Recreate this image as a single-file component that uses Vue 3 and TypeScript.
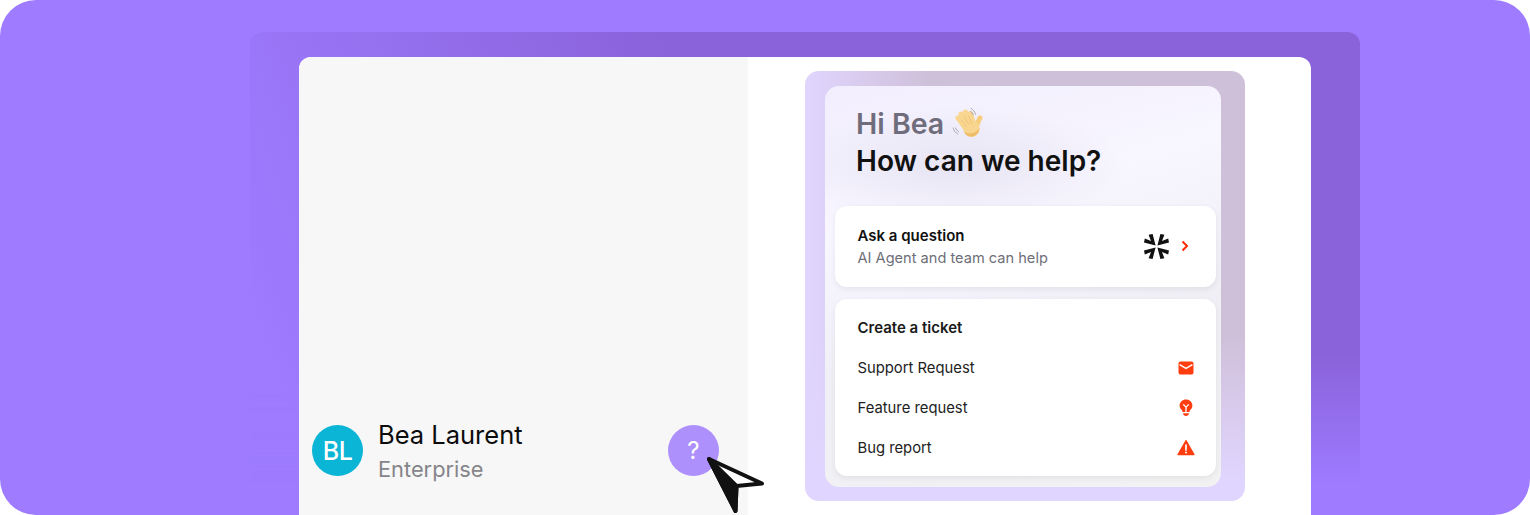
<script setup lang="ts">
const tickets = [
  { label: 'Support Request', icon: 'mail' },
  { label: 'Feature request', icon: 'bulb' },
  { label: 'Bug report', icon: 'alert' },
]
</script>

<template>
  <main class="stage">
    <div class="panel">
      <div class="window">
        <section class="app-side">
          <div class="user-row">
            <div class="avatar">BL</div>
            <div class="user-text">
              <div class="user-name">Bea Laurent</div>
              <div class="user-plan">Enterprise</div>
            </div>
            <button class="help-btn">?</button>
          </div>
          <svg class="cursor" width="60" height="62" viewBox="0 0 60 62">
            <path d="M4 4 L30.5 56 L31.5 31 L57 28.5 Z" fill="#fff" stroke="#111" stroke-width="4" stroke-linejoin="round" />
            <path d="M4 4 L30.5 56 L31.5 31 Z" fill="#111" stroke="#111" stroke-width="4" stroke-linejoin="round" />
          </svg>
        </section>
        <section class="widget-side">
          <div class="shell">
            <div class="widget">
              <header class="greeting">
                <div class="hi">
                  <span>Hi Bea</span>
                  <svg class="wave" width="33" height="32" viewBox="0 0 33 32">
                    <g fill="none" stroke="#f8d68f" stroke-width="5" stroke-linecap="round">
                      <path d="M6 11 L14 22" />
                      <path d="M9 7 L16 19" />
                      <path d="M13.5 5 L19 18" />
                      <path d="M18.5 6.5 L22 18" />
                      <path d="M28 11 C26 14 25 17 24 21" stroke="#f6cd7f" />
                    </g>
                    <ellipse cx="19.5" cy="21.5" rx="8.2" ry="8.3" fill="#f8d68f" />
                    <path d="M12 25 C14 29.5 19.5 31 23.5 28.5 C26 27 27.2 24 27.6 20.5 C25.5 25.5 18 28 12 25 Z" fill="#efbd68" />
                    <path d="M9 12.5 L14.5 20 M12.4 9.5 L17 18 M16.6 8.5 L20 17.5" fill="none" stroke="#eebf72" stroke-width=".7" />
                    <path d="M19 1.5 C21.5 2.8 23 4.8 23.6 7.4 M18.6 4.4 C20 5.2 20.8 6.4 21.2 7.8 M1.2 21 C1.8 23.6 3.4 25.8 5.8 27.2 M3.6 21 C4.2 22.6 5.2 23.8 6.6 24.8" fill="none" stroke="#a5a1aa" stroke-width=".9" stroke-linecap="round" />
                  </svg>
                </div>
                <h1>How can we help?</h1>
              </header>
              <a class="card ask">
                <div>
                  <div class="ask-title">Ask a question</div>
                  <div class="ask-sub">AI Agent and team can help</div>
                </div>
                <svg class="logo" width="25" height="25" viewBox="0 0 25 25" fill="#111">
                  <path d="M11.6 11.6 L0 8.6 L0.8 4.6 L7 7 L4.6 0.8 L8.6 0 Z" />
                  <path d="M11.6 11.6 L0 8.6 L0.8 4.6 L7 7 L4.6 0.8 L8.6 0 Z" transform="matrix(-1 0 0 1 25 0)" />
                  <path d="M11.6 11.6 L0 8.6 L0.8 4.6 L7 7 L4.6 0.8 L8.6 0 Z" transform="matrix(1 0 0 -1 0 25)" />
                  <path d="M11.6 11.6 L0 8.6 L0.8 4.6 L7 7 L4.6 0.8 L8.6 0 Z" transform="matrix(-1 0 0 -1 25 25)" />
                </svg>
                <svg class="chevron" width="8" height="12" viewBox="0 0 8 12" fill="none" stroke="#ff2a00" stroke-width="2">
                  <path d="M1.5 1.5 L6 6 L1.5 10.5" />
                </svg>
              </a>
              <div class="card tickets">
                <div class="tickets-title">Create a ticket</div>
                <div v-for="t in tickets" :key="t.label" class="ticket-row">
                  <span>{{ t.label }}</span>
                  <svg v-if="t.icon === 'mail'" width="18" height="18" viewBox="0 0 18 18">
                    <path d="M1.5 4.6 C1.5 3.4 2.4 2.5 3.6 2.5 L14.4 2.5 C15.6 2.5 16.5 3.4 16.5 4.6 L16.5 13.4 C16.5 14.6 15.6 15.5 14.4 15.5 L3.6 15.5 C2.4 15.5 1.5 14.6 1.5 13.4 Z" fill="#ff3d0f" />
                    <path d="M2.6 5.6 L9 9.4 L15.4 5.6" fill="none" stroke="#fff" stroke-width="1.4" />
                  </svg>
                  <svg v-else-if="t.icon === 'bulb'" width="18" height="18" viewBox="0 0 18 18">
                    <path d="M9 0.6 C5.4 0.6 2.6 3.3 2.6 6.6 C2.6 8.8 3.9 10.4 5.2 11.6 L5.5 13 L12.5 13 L12.8 11.6 C14.1 10.4 15.4 8.8 15.4 6.6 C15.4 3.3 12.6 0.6 9 0.6 Z" fill="#ff3d0f" />
                    <path d="M6 14.2 L12 14.2 C11.8 16 10.6 17 9 17 C7.4 17 6.2 16 6 14.2 Z" fill="#ff3d0f" />
                    <path d="M6.2 5.4 L9 8.2 L11.8 5.4 M9 8.2 L9 13" fill="none" stroke="#fff" stroke-width="1.3" />
                  </svg>
                  <svg v-else width="18" height="18" viewBox="0 0 18 18">
                    <path d="M9 1.6 L17 15.6 L1 15.6 Z" fill="#ff3d0f" stroke="#ff3d0f" stroke-width="1.2" stroke-linejoin="round" />
                    <path d="M9 6.2 L9 11" stroke="#fff" stroke-width="1.7" stroke-linecap="round" />
                    <circle cx="9" cy="13.4" r="1" fill="#fff" />
                  </svg>
                </div>
              </div>
            </div>
          </div>
        </section>
      </div>
    </div>
  </main>
</template>

<style scoped>
.stage {
  width: 1530px;
  height: 515px;
  box-sizing: border-box;
  padding: 32px 170px 0 250px;
  background: #9e7bff;
  border-radius: 36px;
  overflow: hidden;
  font-family: Inter, "Liberation Sans", sans-serif;
}

.panel {
  position: relative;
  height: 100%;
  box-sizing: border-box;
  padding: 25px 49px 0;
}

.panel::before {
  content: "";
  position: absolute;
  inset: 0 0 32px;
  border-radius: 12px 12px 0 0;
  background: linear-gradient(70deg, #9e7bff 5%, #8a63db 45%, #8a63db 100%);
  -webkit-mask-image: linear-gradient(to bottom, #000 72%, transparent 100%);
  mask-image: linear-gradient(to bottom, #000 72%, transparent 100%);
}

.window {
  position: relative;
  display: flex;
  height: 100%;
  background: #fff;
  border-radius: 12px 12px 0 0;
  overflow: hidden;
}

.app-side {
  position: relative;
  width: 449px;
  background: #f7f7f7;
}

.user-row {
  display: flex;
  align-items: center;
  padding: 358px 29px 0 13px;
}

.avatar {
  display: flex;
  align-items: center;
  justify-content: center;
  width: 51px;
  height: 51px;
  border-radius: 50%;
  background: #0bb5d5;
  color: #fff;
  font-size: 25px;
  font-weight: 500;
  letter-spacing: -0.5px;
}

.user-text {
  flex: 1;
  margin: 3px 0 0 15px;
}

.user-name {
  color: #0c0c0c;
  font-size: 25.5px;
  line-height: 34px;
}

.user-plan {
  color: #85858a;
  font-size: 21.8px;
  line-height: 34px;
}

.help-btn {
  width: 51px;
  height: 51px;
  padding: 0;
  border: 0;
  border-radius: 50%;
  background: #ae90fc;
  color: #fff;
  font-family: Inter, sans-serif;
  font-size: 24px;
}

.cursor {
  position: absolute;
  left: 406px;
  top: 398px;
  z-index: 2;
}

.widget-side {
  flex: 1;
  padding: 14px 66px 0 57px;
}

.shell {
  box-sizing: border-box;
  width: 440px;
  height: 430px;
  padding: 15px 24px 14px 20px;
  border-radius: 14px;
  background:
    linear-gradient(to bottom, transparent 62%, #e0d5fe 95%),
    linear-gradient(to right, #e0d5fe 0%, #cfc0da 28%, #cfc0da 100%);
}

.widget {
  box-sizing: border-box;
  height: 401px;
  padding: 0 5px 0 10px;
  border-radius: 14px;
  background:
    radial-gradient(ellipse 170px 60px at 135px 80px, rgba(216, 212, 232, 0.5), transparent),
    linear-gradient(165deg, #f2eefe 0%, #f8f6ff 30%, #f0eff6 60%, #f2f2f3 100%);
}

.greeting {
  height: 120px;
  box-sizing: border-box;
  padding: 19px 0 0 21px;
}

.hi {
  display: flex;
  align-items: center;
  gap: 8px;
  color: #6f6c7b;
  font-size: 28.5px;
  font-weight: 600;
  line-height: 38px;
}

.wave {
  margin-top: -2px;
}

h1 {
  margin: 0;
  color: #111;
  font-size: 28px;
  font-weight: 600;
  line-height: 37px;
}

.card {
  background: #fff;
  border-radius: 12px;
  box-shadow: 0 2px 6px rgba(0, 0, 0, 0.07);
}

.ask {
  display: flex;
  align-items: center;
  height: 81px;
  box-sizing: border-box;
  padding: 0 27px 0 22.5px;
}

.ask > div {
  flex: 1;
}

.ask-title {
  color: #111;
  font-size: 15px;
  font-weight: 600;
  line-height: 23px;
}

.ask-sub {
  color: #6e6e78;
  font-size: 14.6px;
  line-height: 22px;
}

.chevron {
  margin: 0 0 2px 12px;
}

.tickets {
  height: 177px;
  box-sizing: border-box;
  margin-top: 12px;
  padding: 18px 21px 0 22.5px;
}

.tickets-title {
  color: #1a1a1a;
  font-size: 15px;
  font-weight: 600;
  line-height: 22px;
}

.ticket-row {
  display: flex;
  align-items: center;
  justify-content: space-between;
  height: 40px;
  color: #222;
  font-size: 14.8px;
}

.tickets-title + .ticket-row {
  margin-top: 9px;
}
</style>

<style>
html,
body {
  background: #fff;
}
</style>
